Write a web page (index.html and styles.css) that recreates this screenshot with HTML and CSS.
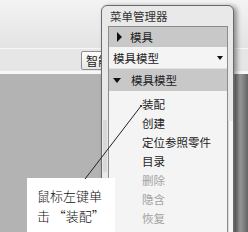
FILE: index.html
```html
<!DOCTYPE html>
<html lang="zh-CN">
<head>
<meta charset="utf-8">
<link rel="stylesheet" href="styles.css">
</head>
<body>
<div class="screen">
  <div class="toolbar">
    <div class="band-top"></div>
    <div class="band-mid"><button class="tool-btn">智能</button></div>
    <div class="band-line"></div>
  </div>
  <div class="work"></div>

  <div class="panel">
    <div class="title">菜单管理器</div>
    <div class="body">
      <div class="gutter"><div class="gutter-thumb"></div></div>
      <div class="list">
        <div class="row head head-closed"><span class="tri-right"></span><span>模具</span></div>
        <div class="row select"><span>模具模型</span><span class="tri-small"></span></div>
        <div class="row head head-open"><span class="tri-down"></span><span>模具模型</span></div>
        <ul class="items">
          <li class="item">装配</li>
          <li class="item">创建</li>
          <li class="item">定位参照零件</li>
          <li class="item">目录</li>
          <li class="item off">删除</li>
          <li class="item off">隐含</li>
          <li class="item off">恢复</li>
        </ul>
      </div>
      <div class="scroll"><div class="scroll-thumb"></div></div>
    </div>
  </div>

  <div class="callout">鼠标左键单<br>击 “装配”</div>
  <svg class="leader" width="248" height="232" viewBox="0 0 248 232">
    <line x1="85" y1="179" x2="141" y2="106" stroke="#222" stroke-width="1"/>
    <circle cx="141" cy="106" r="1.1" fill="#222"/>
  </svg>
</div>
</body>
</html>
```
FILE: styles.css
```css
html, body {
  margin: 0;
  padding: 0;
}
body {
  width: 248px;
  height: 232px;
  overflow: hidden;
  background: #b3b3b3;
  font-family: "Noto Sans CJK SC", "Noto Sans", sans-serif;
}
.screen {
  position: relative;
  width: 248px;
  height: 232px;
  overflow: hidden;
  display: flex;
  flex-direction: column;
}
.toolbar {
  display: flex;
  flex-direction: column;
}
.band-top {
  height: 48px;
  background: linear-gradient(to bottom, #f3f3f3, #e3e3e3);
  border-bottom: 1px solid #f7f7f7;
}
.band-mid {
  height: 22px;
  background: #e6e6e6;
  display: flex;
  align-items: center;
  padding-left: 81px;
  box-sizing: border-box;
}
.tool-btn {
  height: 19px;
  width: 44px;
  margin: 0;
  padding: 0 0 0 4px;
  text-align: left;
  border: 1px solid #8e8e8e;
  border-radius: 2px;
  background: linear-gradient(to bottom, #ffffff, #e6e6e6);
  font-family: "Noto Sans CJK SC", sans-serif;
  font-size: 12px;
  line-height: 17px;
  color: #222;
}
.band-line {
  height: 3px;
  background: #f8f8f8;
}
.work {
  flex: 1;
  background: linear-gradient(to right, #b3b3b3 0, #b3b3b3 234px, #7c7c7c 235px, #9a9a9a 240px, #646464 248px);
}

.panel {
  position: absolute;
  left: 101px;
  top: 5px;
  width: 133px;
  height: 250px;
  box-sizing: border-box;
  border: 1px solid #6a6a6a;
  border-radius: 6px 6px 0 0;
  background: #e9e9e9;
  box-shadow: 3px 1px 5px rgba(0, 0, 0, 0.4);
  display: flex;
  flex-direction: column;
}
.title {
  height: 26px;
  line-height: 20px;
  padding-left: 8px;
  font-size: 11.5px;
  color: #333;
}
.body {
  flex: 1;
  display: flex;
}
.gutter {
  width: 6px;
  padding-top: 94px;
}
.gutter-thumb {
  margin-left: 1px;
  width: 4px;
  height: 52px;
  background: #d8d8d8;
}
.list {
  width: 120px;
  box-sizing: border-box;
  border: 1px solid #8c8c8c;
  border-bottom: none;
  background: #f4f4f4;
  display: flex;
  flex-direction: column;
}
.row {
  display: flex;
  align-items: center;
  font-size: 11.5px;
  color: #1e1e1e;
}
.head {
  background: #c8c8c8;
}
.head-closed {
  height: 20px;
  padding-left: 8px;
  gap: 8px;
}
.head-open {
  height: 22px;
  padding-left: 4px;
  gap: 10px;
}
.select {
  height: 21px;
  padding: 0 4px;
  justify-content: space-between;
  background: #f4f4f4;
  border-bottom: 1px solid #e2e2e2;
}
.tri-right {
  width: 0;
  height: 0;
  border-left: 5px solid #111;
  border-top: 5px solid transparent;
  border-bottom: 5px solid transparent;
}
.tri-down {
  width: 0;
  height: 0;
  border-top: 5px solid #111;
  border-left: 4px solid transparent;
  border-right: 4px solid transparent;
}
.tri-small {
  width: 0;
  height: 0;
  border-top: 4px solid #111;
  border-left: 3px solid transparent;
  border-right: 3px solid transparent;
}
.items {
  list-style: none;
  margin: 0;
  padding: 4px 0 0 33px;
}
.item {
  height: 19px;
  line-height: 19px;
  font-size: 11.5px;
  color: #1e1e1e;
}
.item.off {
  color: #a2a2a2;
}
.scroll {
  width: 5px;
  padding-top: 95px;
}
.scroll-thumb {
  width: 4px;
  height: 200px;
  background: #f6f6f6;
  border-left: 1px solid #dadada;
}

.callout {
  position: absolute;
  left: 27px;
  top: 178px;
  width: 88px;
  height: 60px;
  box-sizing: border-box;
  padding: 8px 0 0 10px;
  background: #ffffff;
  font-family: "Noto Sans CJK SC", sans-serif;
  font-weight: 300;
  font-size: 13px;
  line-height: 20px;
  color: #111;
}
.leader {
  position: absolute;
  left: 0;
  top: 0;
  pointer-events: none;
}
```
